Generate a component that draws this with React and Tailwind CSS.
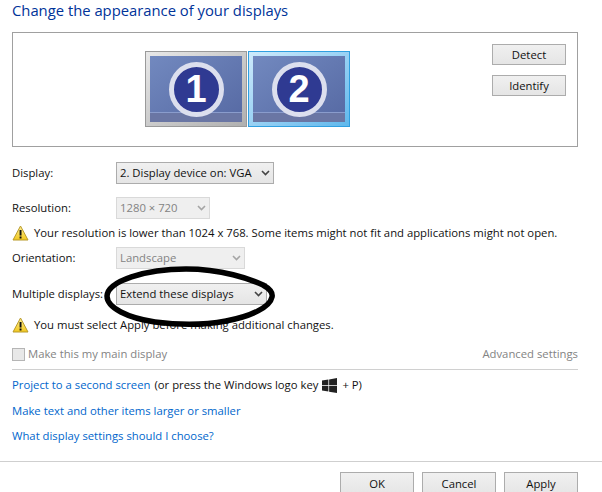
const FONT = "font-['Open_Sans','Noto_Sans',sans-serif]";

function Chevron({ color = '#444' }) {
  return (
    <svg width="9" height="6" viewBox="0 0 9 6" fill="none" className="shrink-0">
      <path d="M1 1l3.5 3.5L8 1" stroke={color} strokeWidth="1.6" />
    </svg>
  );
}

function Warning() {
  return (
    <svg width="17" height="16" viewBox="0 0 17 16" className="shrink-0">
      <defs>
        <linearGradient id="warn" x1="0" y1="0" x2="0" y2="1">
          <stop offset="0" stopColor="#fff09a" />
          <stop offset="1" stopColor="#f2c81e" />
        </linearGradient>
      </defs>
      <path d="M8.5 1L16 15H1z" fill="url(#warn)" stroke="#b89a2a" strokeLinejoin="round" />
      <rect x="7.6" y="5" width="1.9" height="5.5" fill="#111" />
      <rect x="7.6" y="11.5" width="1.9" height="2" fill="#111" />
    </svg>
  );
}

function Monitor({ n, active }) {
  return (
    <div className={`w-[102px] h-[76px] border-[1px] p-[4px] ${active ? 'border-[#2f9fe0] bg-gradient-to-br from-[#cdeafb] to-[#5fb8ec]' : 'border-[#9a9a9a] bg-gradient-to-br from-[#e8e8e8] to-[#b0b0b0]'}`}>
      <div className="relative h-full bg-gradient-to-br from-[#7289bf] to-[#5669a3] flex items-center justify-center">
        <div className="absolute left-0 right-0 bottom-0 h-[10px] bg-[#6a76a4] border-t border-[#8a9ccc]" />
        <div className="relative w-[55px] h-[55px] rounded-full bg-[#2f3a92] border-[5px] border-[#dcdfee] flex items-center justify-center">
          <span className="text-white text-[38px] leading-none font-bold font-['Liberation_Sans',sans-serif]">{n}</span>
        </div>
      </div>
    </div>
  );
}

function Select({ width, disabled, children }) {
  let look = 'border-[#acacac] bg-gradient-to-b from-[#f0f0f0] to-[#e5e5e5] text-[#111]';
  if (disabled) look = 'border-[#d9d9d9] bg-[#efefef] text-[#838383]';
  return (
    <div className={`flex items-center justify-between h-[22px] pl-[3px] pr-[3px] border ${look} ${width}`}>
      <span className="whitespace-nowrap">{children}</span>
      <Chevron color={disabled ? '#a5a5a5' : '#444'} />
    </div>
  );
}

function Row({ label, className, children }) {
  return (
    <div className={`flex items-center ${className}`}>
      <span className="w-[104px] whitespace-nowrap text-[#111]">{label}</span>
      {children}
    </div>
  );
}

function Button({ className, children }) {
  return (
    <button className={`flex items-center justify-center border border-[#acacac] bg-gradient-to-b from-[#f0f0f0] to-[#e5e5e5] text-[#111] ${className}`}>
      {children}
    </button>
  );
}

export default function App() {
  return (
    <div className={`relative w-[602px] h-[492px] overflow-hidden bg-white text-[11.3px] ${FONT}`}>
      <h1 className="pl-[12px] h-[32px] text-[14.8px] leading-[20px] text-[#003399]">Change the appearance of your displays</h1>

      <div className="mx-[12px] w-[566px] h-[115px] border border-[#a0a0a0] flex">
        <div className="flex-1 flex gap-[1px] pl-[132px] pt-[18px]">
          <Monitor n="1" />
          <Monitor n="2" active />
        </div>
        <div className="flex flex-col gap-[10px] pt-[11px] pr-[11px]">
          <Button className="w-[74px] h-[21px] pt-[1px]">Detect</Button>
          <Button className="w-[74px] h-[21px] pt-[1px]">Identify</Button>
        </div>
      </div>

      <div className="px-[12px]">
        <Row label="Display:" className="mt-[15px]">
          <Select width="w-[158px]">2. Display device on: VGA</Select>
        </Row>
        <Row label="Resolution:" className="mt-[13px]">
          <Select width="w-[94px]" disabled>1280 × 720</Select>
        </Row>
        <div className="flex items-center gap-[5px] mt-[5px] h-[17px] text-[#111] whitespace-nowrap">
          <Warning />
          <span className="mt-[2px]">Your resolution is lower than 1024 x 768. Some items might not fit and applications might not open.</span>
        </div>
        <Row label="Orientation:" className="mt-[6px]">
          <Select width="w-[129px]" disabled>Landscape</Select>
        </Row>
        <Row label="Multiple displays:" className="mt-[14px]">
          <Select width="w-[151px]">Extend these displays</Select>
        </Row>
        <div className="flex items-center gap-[5px] mt-[11px] h-[17px] text-[#111] whitespace-nowrap">
          <Warning />
          <span className="mt-[2px]">You must select Apply before making additional changes.</span>
        </div>
        <div className="flex items-center justify-between mt-[14px] w-[566px] h-[15px] text-[#838383]">
          <div className="flex items-center gap-[3px]">
            <div className="w-[13px] h-[13px] border border-[#b5b5b5] bg-[#e8e8e8]" />
            <span>Make this my main display</span>
          </div>
          <span>Advanced settings</span>
        </div>
        <div className="mt-[7px] w-[566px] h-[1px] bg-[#d0d0d0]" />
        <div className="flex items-center mt-[6px] h-[18px] whitespace-nowrap">
          <a className="text-[#0066cc]">Project to a second screen</a>
          <span className="ml-[4px] text-[#111]">(or press the Windows logo key</span>
          <svg width="15" height="15" viewBox="0 0 16 16" className="ml-[4px]" fill="#222">
            <path d="M0 2.6L6.8 1.6V7.5H0zM7.6 1.5L16 0V7.5H7.6zM0 8.3H6.8V14.4L0 13.4zM7.6 8.3H16V16L7.6 14.6z" />
          </svg>
          <span className="ml-[5px] text-[#111]">+ P)</span>
        </div>
        <div className="mt-[9px] h-[18px] text-[#0066cc]">Make text and other items larger or smaller</div>
        <div className="mt-[7px] h-[18px] text-[#0066cc]">What display settings should I choose?</div>
      </div>

      <div className="mt-[15px] h-[1px] bg-[#cfcfcf]" />
      <div className="flex justify-end gap-[8px] pr-[24px] mt-[10px]">
        <Button className="w-[74px] h-[24px]">OK</Button>
        <Button className="w-[74px] h-[24px]">Cancel</Button>
        <Button className="w-[74px] h-[24px]">Apply</Button>
      </div>

      {/* hand drawn marker ring round the dropdown */}
      <svg className="absolute left-0 top-0 pointer-events-none" width="602" height="492" fill="none">
        <path
          d="M107 296C108 281 145 269 186 269C222 269 250 279 263 285C270 289 273 293 272 297C270 307 252 316 226 321C205 325 178 325 155 322C128 318 107 308 107 296Z"
          stroke="#000"
          strokeWidth="5.5"
        />
      </svg>
    </div>
  );
}
